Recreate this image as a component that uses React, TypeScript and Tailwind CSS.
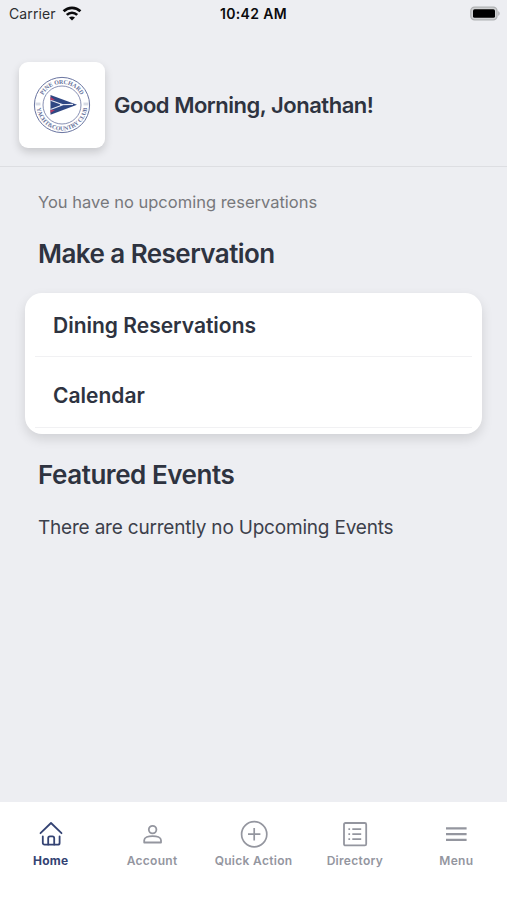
import type { ReactNode } from "react";

function WifiIcon() {
  return (
    <svg width="20" height="16" viewBox="0 0 20 16" fill="none" stroke="#0a0a0c" strokeWidth="2.7">
      <path d="M1.6 5.3C6.3 .7 13.7 .7 18.4 5.3" />
      <path d="M4.8 8.9c3-2.9 7.4-2.9 10.4 0" />
      <path d="M10 14.6 7 11.6c1.7-1.5 4.3-1.5 6 0Z" fill="#0a0a0c" stroke="none" />
    </svg>
  );
}

function BatteryIcon() {
  return (
    <svg width="32" height="16" viewBox="0 0 32 16">
      <rect x="1.8" y="1.2" width="26.2" height="12.6" rx="3.8" fill="#d0d1d3" stroke="#b0b1b3" strokeWidth="1.3" />
      <rect x="4" y="3.2" width="22" height="8.6" rx="1.6" fill="#000" />
      <path d="M29.2 5.2c2 .7 2 3.8 0 4.5Z" fill="#b0b1b3" />
    </svg>
  );
}

function ClubLogo() {
  return (
    <svg width="60" height="60" viewBox="0 0 60 60">
      <defs>
        <path id="arc-top" d="M8.8 30a21.2 21.2 0 0 1 42.4 0" />
        <path id="arc-bottom" d="M4.6 30a25.4 25.4 0 0 0 50.8 0" />
      </defs>
      <g fill="none" stroke="#6974a0">
        <circle cx="30" cy="30" r="27.6" strokeWidth="1" />
        <circle cx="30" cy="30" r="19" strokeWidth=".8" />
      </g>
      <g fill="#66719b" fontFamily="'Liberation Serif', serif" fontSize="6" fontWeight="700" textAnchor="middle">
        <text textLength="46" lengthAdjust="spacing">
          <textPath href="#arc-top" startOffset="50%">PINE ORCHARD</textPath>
        </text>
        <text textLength="73" lengthAdjust="spacing">
          <textPath href="#arc-bottom" startOffset="50%">YACHT&amp;COUNTRY CLUB</textPath>
        </text>
      </g>
      <path d="M3.5 28.2h5M3.5 29.8h5M51.5 28.2h5M51.5 29.8h5" stroke="#a0a7c1" strokeWidth=".6" />
      <path d="M18.5 20 45 29.8 18.5 39.7Z" fill="#2f4783" />
      <path d="M18.5 25.2 31 29.8 18.5 34.6M28 29.8l13-.4" fill="none" stroke="#e8ebf4" strokeWidth="1.1" />
      <path d="m18.5 21.7 4.5 3.2-4.5 .3ZM18.5 34.8l4.5 .2-4.5 3Z" fill="#b23966" />
    </svg>
  );
}

function HomeIcon() {
  return (
    <svg width="26" height="28" viewBox="0 0 26 28" fill="none" stroke="#344373" strokeWidth="1.8" strokeLinecap="round" strokeLinejoin="round">
      <path d="M2.5 13.2 13 3l10.5 10.2" />
      <path d="M4.8 16.3v6.7a1.7 1.7 0 0 0 1.7 1.7h13.4a1.7 1.7 0 0 0 1.7-1.7v-6.7" />
      <path d="M10.2 24.5v-6.3a1.8 1.8 0 0 1 1.8-1.8h2.4a1.8 1.8 0 0 1 1.8 1.8v6.3" />
    </svg>
  );
}

function AccountIcon() {
  return (
    <svg width="26" height="28" viewBox="0 0 26 28" fill="none" stroke="#94969f" strokeWidth="1.8" strokeLinejoin="round">
      <circle cx="13.6" cy="9.6" r="3.8" />
      <path d="M5.2 22.5v-2.2c0-2.7 4.1-4.2 8.4-4.2s8.4 1.5 8.4 4.2v2.2Z" />
    </svg>
  );
}

function QuickIcon() {
  return (
    <svg width="28" height="28" viewBox="0 0 28 28" fill="none" stroke="#94969f" strokeWidth="1.7">
      <circle cx="14.2" cy="14.2" r="12.6" />
      <path d="M14.2 8v12.4M8 14.2h12.4" />
    </svg>
  );
}

function DirectoryIcon() {
  return (
    <svg width="26" height="28" viewBox="0 0 26 28" fill="none" stroke="#94969f" strokeWidth="1.8">
      <rect x="2" y="3" width="22.2" height="22.4" rx="1.4" />
      <path d="M10.3 9.2h8.9M10.3 14.2h8.9M10.3 19.2h8.9M6.4 9.2h1.7M6.4 14.2h1.7M6.4 19.2h1.7" />
    </svg>
  );
}

function MenuIcon() {
  return (
    <svg width="26" height="28" viewBox="0 0 26 28" fill="none" stroke="#94969f" strokeWidth="2.1">
      <path d="M3 8.4h20.6M3 14.1h20.6M3 19.9h20.6" />
    </svg>
  );
}

function Tab({ icon, label, active = false }: { icon: ReactNode; label: string; active?: boolean }) {
  return (
    <button className="flex flex-1 flex-col items-center pt-[18px]">
      {icon}
      <span
        className={`mt-[5px] whitespace-nowrap text-[12px] leading-4 tracking-[0.3px] ${
          active ? "font-bold text-[#344373]" : "font-semibold text-[#94969f]"
        }`}
      >
        {label}
      </span>
    </button>
  );
}

export default function App() {
  return (
    <div className="flex h-[900px] w-[507px] flex-col overflow-hidden bg-[#edeef2] font-['Inter','Liberation_Sans',sans-serif] text-[#2e3340]">
      <div className="grid h-[27px] grid-cols-3 items-center text-[14px] text-[#0a0a0c]">
        <div className="flex items-center gap-1.5 pl-[9px]">
          <span className="tracking-[0.1px] text-[#2d2e31]">Carrier</span>
          <WifiIcon />
        </div>
        <span className="text-center font-semibold tracking-[0.35px]">10:42 AM</span>
        <div className="flex justify-end pr-[6px]">
          <BatteryIcon />
        </div>
      </div>

      <header className="flex h-[140px] items-center border-b border-[#dddee2] pt-[17px] pl-[19px]">
        <div className="flex size-[86px] items-center justify-center rounded-[9px] bg-white shadow-[0_4px_9px_rgba(0,0,0,0.16)]">
          <ClubLogo />
        </div>
        <h1 className="ml-[9px] text-[22px] font-semibold tracking-[-0.48px]">Good Morning, Jonathan!</h1>
      </header>

      <main className="flex-1">
        <p className="mt-[23px] ml-[38px] text-[16.5px] leading-6 text-[#77787c]">You have no upcoming reservations</p>
        <h2 className="mt-[24px] ml-[38px] text-[26px] leading-8 font-semibold tracking-[-0.55px]">Make a Reservation</h2>
        <div className="mt-[23px] mr-[25px] ml-[25px] h-[141px] rounded-[17px] bg-white px-[10px] shadow-[0_5px_12px_rgba(0,0,0,0.12)]">
          <div className="flex h-16 items-center border-b border-[#f1f1f3] pt-[2px] pl-[18px] text-[21px] font-semibold">Dining Reservations</div>
          <div className="flex h-[71px] items-center border-b border-[#f1f1f3] pt-[7px] pl-[18px] text-[21px] font-semibold">Calendar</div>
        </div>
        <h2 className="mt-[25px] ml-[38px] text-[26px] leading-8 font-semibold tracking-[-0.45px]">Featured Events</h2>
        <p className="mt-[25px] ml-[38px] text-[19px] leading-6 tracking-[-0.2px] text-[#3c404b]">There are currently no Upcoming Events</p>
      </main>

      <nav className="flex h-[98px] items-start bg-white">
        <Tab icon={<HomeIcon />} label="Home" active />
        <Tab icon={<AccountIcon />} label="Account" />
        <Tab icon={<QuickIcon />} label="Quick Action" />
        <Tab icon={<DirectoryIcon />} label="Directory" />
        <Tab icon={<MenuIcon />} label="Menu" />
      </nav>
    </div>
  );
}
